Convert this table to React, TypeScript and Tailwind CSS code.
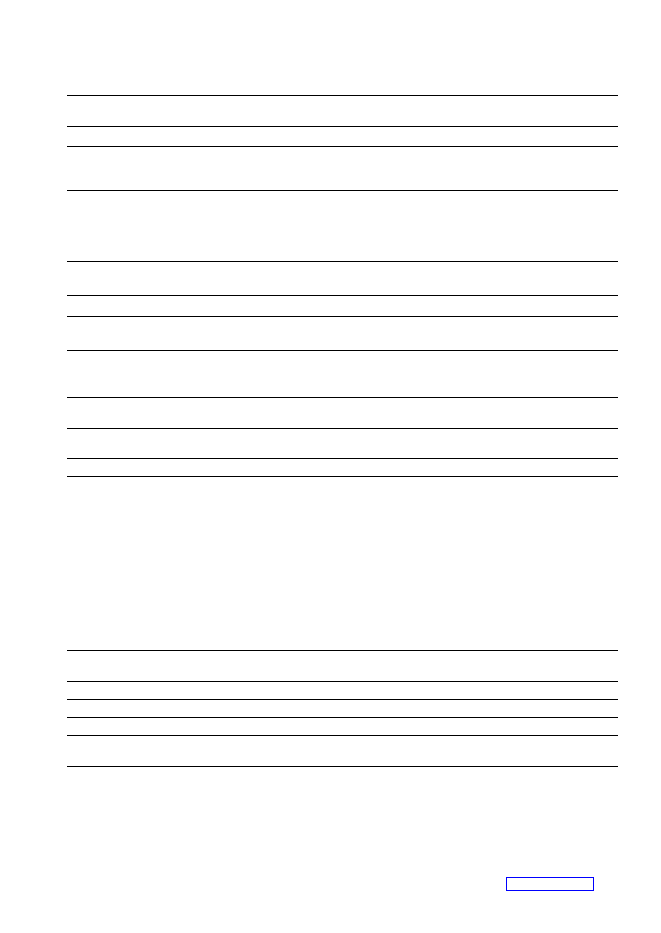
const TOP_ROWS = [31, 20, 44, 71, 34, 21, 34, 47, 31, 30];
const BOTTOM_ROWS = [31, 18, 18, 18];

function Row({ h }: { h: number }) {
  return <div className="border-t border-black" style={{ height: h }} />;
}

export default function App() {
  return (
    <div className="relative h-[933px] w-[661px] bg-white font-['Liberation_Sans',sans-serif]">
      <div className="pt-[95px] pl-[67px]">
        <div className="w-[551px]">
          {TOP_ROWS.map((h, i) => (
            <Row key={i} h={h} />
          ))}
          <div className="h-[19px] border-y border-black" />
        </div>

        <div className="mt-[173px] w-[551px]">
          {BOTTOM_ROWS.map((h, i) => (
            <Row key={i} h={h} />
          ))}
          <div className="h-[32px] border-y border-black" />
        </div>
      </div>

      <div className="mt-[110px] ml-[506px] h-[14px] w-[88px] border border-[#0000ff]" />
    </div>
  );
}
